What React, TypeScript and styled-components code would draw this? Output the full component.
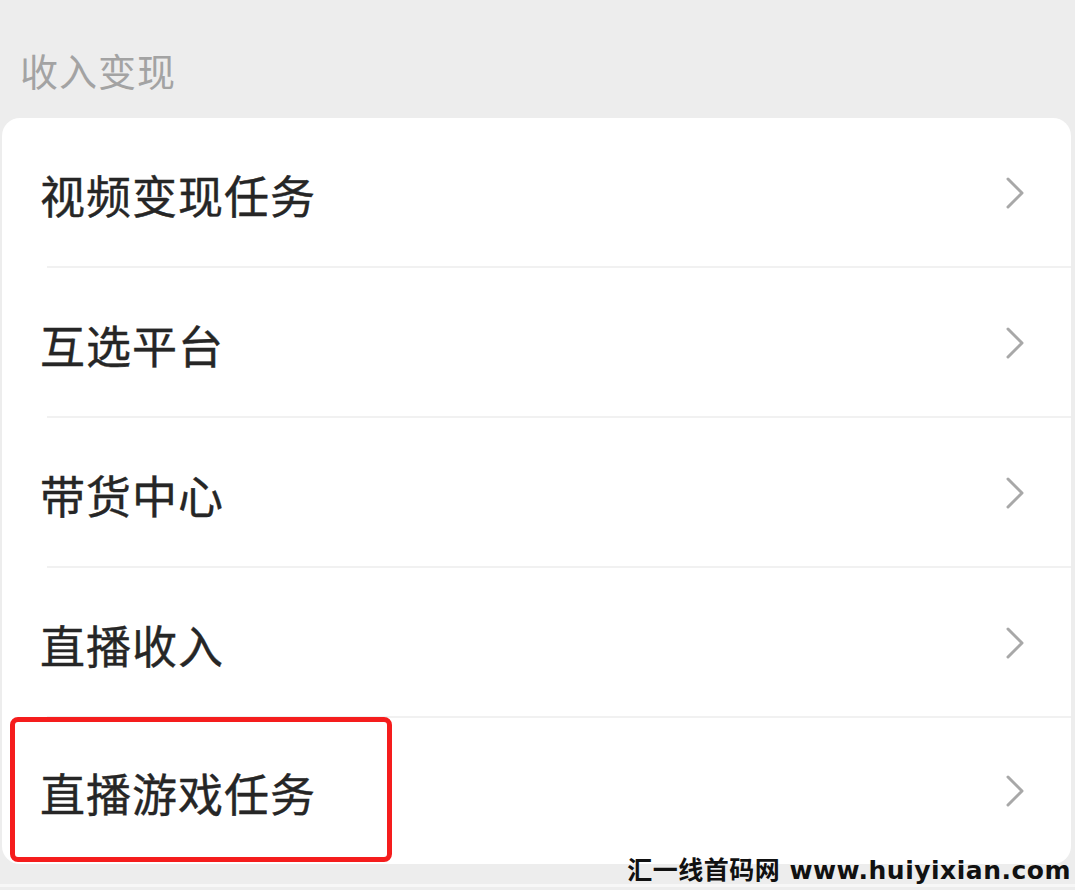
import React from 'react';
import styled, { createGlobalStyle } from 'styled-components';

const GlobalStyle = createGlobalStyle`
  html, body {
    margin: 0;
    padding: 0;
    background: #ededed;
  }
  body {
    font-family: "Noto Sans CJK SC", "Noto Sans", sans-serif;
  }
`;

const items = ['视频变现任务', '互选平台', '带货中心', '直播收入', '直播游戏任务'];

export default function App() {
  return (
    <Page>
      <GlobalStyle />
      <SectionTitle>收入变现</SectionTitle>
      <Card>
        {items.map((label, i) => (
          <Row key={label} last={i === items.length - 1}>
            <Label>{label}</Label>
            <Chevron viewBox="0 0 20 34" aria-hidden>
              <path d="M3 3 L17 17 L3 31" fill="none" stroke="#a8a8a8" strokeWidth="3" strokeLinecap="round" strokeLinejoin="round" />
            </Chevron>
            {i === items.length - 1 && <Highlight />}
          </Row>
        ))}
      </Card>
      <Footer />
      <Watermark>汇一线首码网 www.huiyixian.com</Watermark>
    </Page>
  );
}

const Page = styled.div`
  position: relative;
  width: 1075px;
  height: 890px;
  overflow: hidden;
  background: #ededed;
`;

const SectionTitle = styled.div`
  height: 118px;
  box-sizing: border-box;
  padding: 46px 0 0 20px;
  font-size: 38px;
  line-height: 48px;
  color: #a3a3a3;
  letter-spacing: 1px;
`;

const Card = styled.div`
  margin: 0 4px 0 2px;
  background: #fff;
  border-radius: 18px;
`;

const Row = styled.div<{ last?: boolean }>`
  position: relative;
  height: ${p => (p.last ? 146 : 150)}px;
  display: flex;
  align-items: center;
  justify-content: space-between;
  padding: 0 40px 0 38px;
  box-sizing: border-box;
  &::after {
    content: '';
    display: ${p => (p.last ? 'none' : 'block')};
    position: absolute;
    left: 45px;
    right: 0;
    bottom: 0;
    height: 2px;
    background: #f1f1f1;
  }
`;

const Label = styled.span`
  font-size: 45px;
  line-height: 56px;
  color: #262626;
  letter-spacing: 1px;
  padding-top: 4px;
  -webkit-text-stroke: 0.4px #262626;
`;

const Chevron = styled.svg`
  width: 20px;
  height: 34px;
  margin-right: 6px;
`;

const Highlight = styled.div`
  position: absolute;
  left: 8px;
  top: -1px;
  width: 382px;
  height: 145px;
  box-sizing: border-box;
  border: 5px solid #f51d1d;
  border-radius: 8px;
`;

const Footer = styled.div`
  height: 20px;
  border-bottom: 3px solid #f7f7f7;
`;

const Watermark = styled.div`
  position: absolute;
  right: 4px;
  bottom: 4px;
  font-family: "DejaVu Sans", "Noto Sans CJK SC", sans-serif;
  font-weight: 700;
  font-size: 25px;
  line-height: 30px;
  color: #111;
  letter-spacing: 0.5px;
`;
